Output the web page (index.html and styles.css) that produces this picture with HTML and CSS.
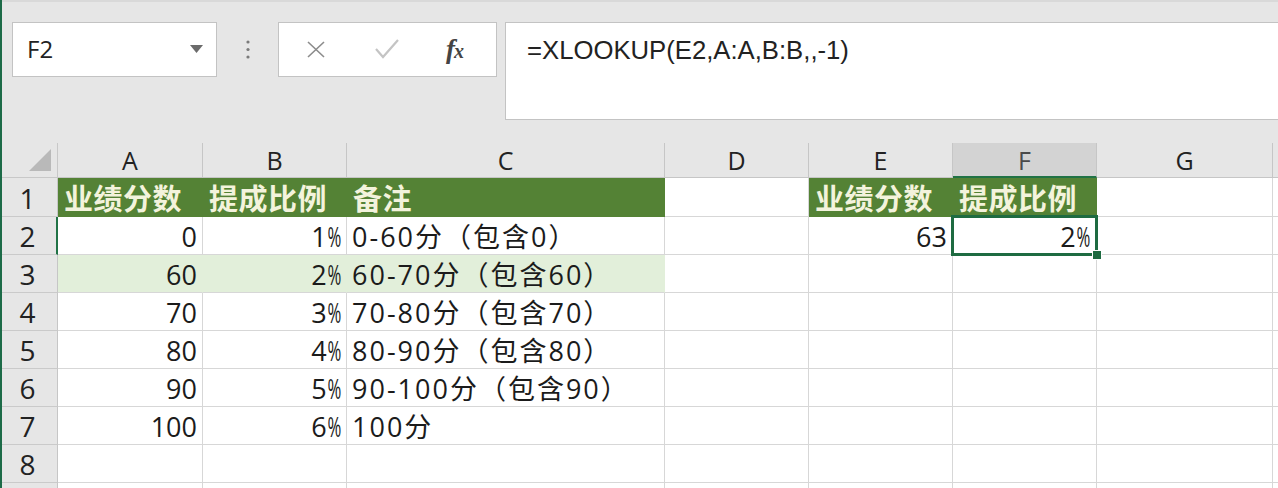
FILE: index.html
```html
<!DOCTYPE html>
<html lang="zh-CN">
<head>
<meta charset="utf-8">
<title>XLOOKUP</title>
<link rel="stylesheet" href="styles.css">
</head>
<body>
<div class="app">
  <div class="toolbar">
    <div class="namebox">
      <span class="name">F2</span>
      <svg class="dd" width="13" height="8" viewBox="0 0 13 8"><path d="M0 0 H13 L6.5 8 Z" fill="#6b6b6b"/></svg>
    </div>
    <div class="sep">
      <svg width="4" height="20" viewBox="0 0 4 20"><circle cx="2" cy="2" r="1.6" fill="#7a7a7a"/><circle cx="2" cy="9.5" r="1.6" fill="#7a7a7a"/><circle cx="2" cy="17" r="1.6" fill="#7a7a7a"/></svg>
    </div>
    <div class="btns">
      <svg class="ic-x" width="20" height="17" viewBox="0 0 20 17"><path d="M2 1 L18 16 M18 1 L2 16" stroke="#8c8c8c" stroke-width="1.6" fill="none"/></svg>
      <svg class="ic-ok" width="26" height="21" viewBox="0 0 26 21"><path d="M2 11 L9 19 L24 2" stroke="#c4c4c4" stroke-width="2.2" fill="none"/></svg>
      <span class="fx">f<span class="x">x</span></span>
    </div>
    <div class="formula">=XLOOKUP(E2,A:A,B:B,,-1)</div>
  </div>

  <div class="sheet">
    <div class="corner"><svg width="22" height="22" viewBox="0 0 22 22"><path d="M22 0 V22 H0 Z" fill="#b9b9b9"/></svg></div>
    <div class="ch">A</div>
    <div class="ch">B</div>
    <div class="ch">C</div>
    <div class="ch">D</div>
    <div class="ch">E</div>
    <div class="ch ch-sel">F</div>
    <div class="ch">G</div>
    <div class="ch"></div>

    <div class="rh">1</div>
    <div class="c hd">业绩分数</div>
    <div class="c hd">提成比例</div>
    <div class="c hd">备注</div>
    <div class="c"></div>
    <div class="c hd">业绩分数</div>
    <div class="c hd">提成比例</div>
    <div class="c"></div>
    <div class="c"></div>

    <div class="rh rh-sel">2</div>
    <div class="c num">0</div>
    <div class="c num">1<span class="pct">%</span></div>
    <div class="c note">0-60分（包含0）</div>
    <div class="c"></div>
    <div class="c num">63</div>
    <div class="c num sel">2<span class="pct">%</span><span class="handle"></span></div>
    <div class="c"></div>
    <div class="c"></div>

    <div class="rh">3</div>
    <div class="c num lg">60</div>
    <div class="c num lg">2<span class="pct">%</span></div>
    <div class="c note lg">60-70分（包含60）</div>
    <div class="c"></div>
    <div class="c"></div>
    <div class="c"></div>
    <div class="c"></div>
    <div class="c"></div>

    <div class="rh">4</div>
    <div class="c num">70</div>
    <div class="c num">3<span class="pct">%</span></div>
    <div class="c note">70-80分（包含70）</div>
    <div class="c"></div>
    <div class="c"></div>
    <div class="c"></div>
    <div class="c"></div>
    <div class="c"></div>

    <div class="rh">5</div>
    <div class="c num">80</div>
    <div class="c num">4<span class="pct">%</span></div>
    <div class="c note">80-90分（包含80）</div>
    <div class="c"></div>
    <div class="c"></div>
    <div class="c"></div>
    <div class="c"></div>
    <div class="c"></div>

    <div class="rh">6</div>
    <div class="c num">90</div>
    <div class="c num">5<span class="pct">%</span></div>
    <div class="c note">90-100分（包含90）</div>
    <div class="c"></div>
    <div class="c"></div>
    <div class="c"></div>
    <div class="c"></div>
    <div class="c"></div>

    <div class="rh">7</div>
    <div class="c num">100</div>
    <div class="c num">6<span class="pct">%</span></div>
    <div class="c note">100分</div>
    <div class="c"></div>
    <div class="c"></div>
    <div class="c"></div>
    <div class="c"></div>
    <div class="c"></div>

    <div class="rh">8</div>
    <div class="c"></div>
    <div class="c"></div>
    <div class="c"></div>
    <div class="c"></div>
    <div class="c"></div>
    <div class="c"></div>
    <div class="c"></div>
    <div class="c"></div>

    <div class="rh"></div>
    <div class="c"></div>
    <div class="c"></div>
    <div class="c"></div>
    <div class="c"></div>
    <div class="c"></div>
    <div class="c"></div>
    <div class="c"></div>
    <div class="c"></div>
  </div>
</div>
</body>
</html>
```

FILE: styles.css
```css
* { box-sizing: border-box; }

html, body {
  margin: 0;
  padding: 0;
  width: 1278px;
  height: 488px;
  overflow: hidden;
  background: #ffffff;
}

.app {
  width: 1278px;
  height: 488px;
  border-left: 2px solid #1d6b48;
  font-family: "Open Sans", "Noto Sans CJK SC", sans-serif;
  color: #1b1b1b;
  overflow: hidden;
}

/* ---------- formula bar ---------- */
.toolbar {
  height: 143px;
  background: #e6e6e6;
  border-top: 2px solid #d9d9d9;
  display: flex;
  align-items: flex-start;
  padding: 20px 0 0 10px;
}

.namebox {
  width: 205px;
  height: 55px;
  background: #fff;
  border: 1px solid #c3c3c3;
  display: flex;
  align-items: center;
  justify-content: space-between;
  padding: 0 13px 2px 14px;
}

.name {
  font-family: "Open Sans", sans-serif;
  font-size: 24px;
  color: #222;
}

.sep {
  width: 61px;
  height: 55px;
  display: flex;
  align-items: center;
  justify-content: center;
}

.btns {
  width: 219px;
  height: 55px;
  background: #fff;
  border: 1px solid #c3c3c3;
  display: flex;
  align-items: center;
  padding: 0 0 0 27px;
}

.ic-x { margin-right: 48px; }
.ic-ok { margin-right: 46px; margin-top: -2px; }

.fx {
  font-family: "Liberation Serif", serif;
  font-style: italic;
  font-weight: bold;
  font-size: 27px;
  color: #444;
  letter-spacing: -1px;
}
.fx .x { font-size: 20px; }

.formula {
  flex: 1;
  height: 98px;
  margin-left: 8px;
  margin-right: -4px;
  background: #fff;
  border: 1px solid #c3c3c3;
  padding: 9px 0 0 21px;
  font-family: "Liberation Sans", sans-serif;
  font-size: 25.7px;
  color: #222;
  line-height: 36px;
}

/* ---------- sheet grid ---------- */
.sheet {
  display: grid;
  grid-template-columns: 56px 145px 144px 318px 144px 144px 144px 176px 1fr;
  grid-template-rows: 35px 39px repeat(8, 38px);
}

.corner {
  background: #e6e6e6;
  border-right: 1px solid #c8c8c8;
  border-bottom: 1px solid #c8c8c8;
  display: flex;
  align-items: flex-end;
  justify-content: flex-end;
  padding: 0 6px 6px 0;
}

.ch {
  background: #e6e6e6;
  border-right: 1px solid #c6c6c6;
  border-bottom: 1px solid #c6c6c6;
  display: flex;
  align-items: flex-end;
  justify-content: center;
  font-size: 25px;
  line-height: 1;
  padding-bottom: 4px;
  color: #222;
}

.ch-sel {
  background: #d3d3d3;
  border-bottom: 2px solid #217346;
  color: #4a4a4a;
  padding-bottom: 3px;
}

.rh {
  background: #e6e6e6;
  border-right: 1px solid #c6c6c6;
  border-bottom: 1px solid #cacaca;
  display: flex;
  align-items: flex-end;
  justify-content: center;
  font-size: 28px;
  line-height: 1;
  padding: 0 4px 4px 0;
  color: #222;
}

.rh-sel {
  border-right: 2px solid #217346;
  padding-right: 3px;
}

.c {
  position: relative;
  background: #fff;
  border-right: 1px solid #d7d7d7;
  border-bottom: 1px solid #d7d7d7;
  display: flex;
  align-items: flex-end;
  font-size: 27px;
  line-height: 1;
  padding: 0 5px 4px 5px;
  white-space: nowrap;
}

.num { justify-content: flex-end; }

.note { letter-spacing: 2px; }

.pct {
  display: inline-block;
  transform: scaleX(0.62);
  transform-origin: right center;
  margin-left: -8px;
}

.hd {
  background: #548235;
  border-right-color: #548235;
  border-bottom-color: #548235;
  color: #f3f3dc;
  font-weight: bold;
  font-size: 29px;
  padding-bottom: 3px;
  padding-left: 6px;
  letter-spacing: 0.5px;
}

.lg {
  background: #e2efda;
  border-right-color: #e2efda;
}

.sel { z-index: 3; padding-right: 6px; }

.sel::after {
  content: "";
  position: absolute;
  left: -2px;
  top: -2px;
  right: -2px;
  bottom: -2px;
  border: 3px solid #1e6b41;
  pointer-events: none;
}

.handle {
  position: absolute;
  right: -6px;
  bottom: -6px;
  width: 10px;
  height: 10px;
  background: #1e6b41;
  border: 1px solid #fff;
  z-index: 4;
}
```
